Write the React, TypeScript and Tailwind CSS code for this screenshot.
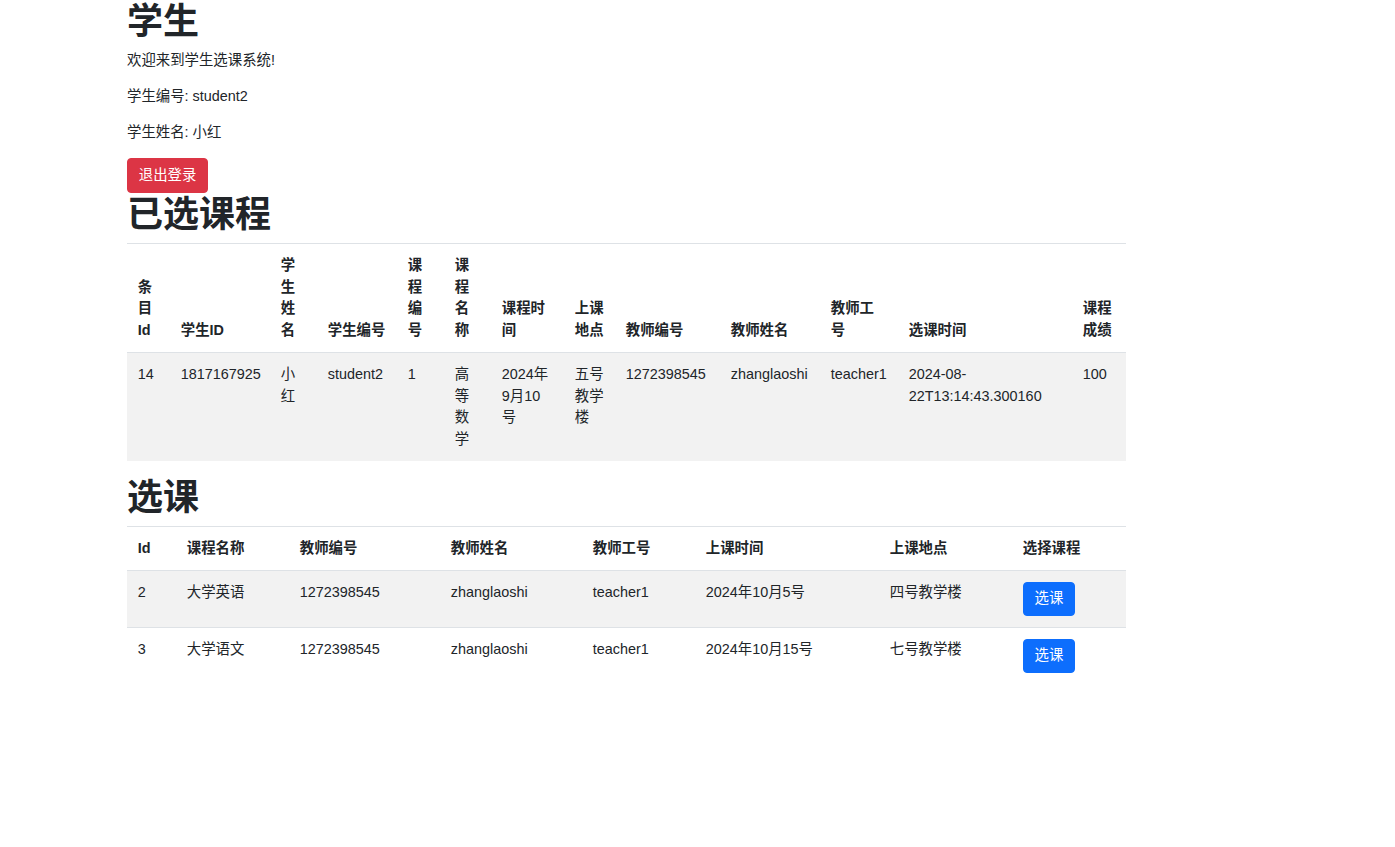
import React from 'react';

const font = { fontFamily: '"Liberation Sans", "Noto Sans CJK SC", sans-serif' };

const selectedCols = [43, 100, 47, 80, 47, 47, 73, 51, 105, 100, 78, 174, 54];
const selectedHead = ['条目Id', '学生ID', '学生姓名', '学生编号', '课程编号', '课程名称', '课程时间', '上课地点', '教师编号', '教师姓名', '教师工号', '选课时间', '课程成绩'];
const selectedRows = [
  ['14', '1817167925', '小红', 'student2', '1', '高等数学', '2024年9月10号', '五号教学楼', '1272398545', 'zhanglaoshi', 'teacher1', '2024-08-22T13:14:43.300160', '100'],
];

const courseCols = [49, 113, 151, 142, 113, 184, 133, 114];
const courseHead = ['Id', '课程名称', '教师编号', '教师姓名', '教师工号', '上课时间', '上课地点', '选择课程'];
const courses = [
  ['2', '大学英语', '1272398545', 'zhanglaoshi', 'teacher1', '2024年10月5号', '四号教学楼'],
  ['3', '大学语文', '1272398545', 'zhanglaoshi', 'teacher1', '2024年10月15号', '七号教学楼'],
];

const th = 'p-[10.8px] align-bottom text-left font-bold border-t border-b border-[#dee2e6]';
const td = 'p-[10.8px] align-top border-t border-[#dee2e6]';

export default function App() {
  return (
    <div className="min-h-[847px] bg-white text-[#212529] text-[14.4px] leading-[1.5]" style={font}>
      <div className="ml-[127px] w-[999px]">
        <h1 className="text-[36px] leading-[1.2] font-bold mb-[7.2px]">学生</h1>
        <p className="mb-[14.4px]">欢迎来到学生选课系统!</p>
        <p className="mb-[14.4px]">学生编号: student2</p>
        <p className="mb-[14.4px]">学生姓名: 小红</p>
        <button className="block bg-[#dc3545] text-white border border-[#dc3545] rounded-[4px] px-[10.8px] py-[5.4px] leading-[1.5]">
          退出登录
        </button>

        <h2 className="text-[36px] leading-[1.2] font-bold mb-[7.2px]">已选课程</h2>
        <table className="w-full table-fixed border-collapse mb-[14.4px]">
          <colgroup>
            {selectedCols.map((w, i) => (
              <col key={i} style={{ width: w }} />
            ))}
          </colgroup>
          <thead>
            <tr>
              {selectedHead.map((h) => (
                <th key={h} className={th}>{h}</th>
              ))}
            </tr>
          </thead>
          <tbody>
            {selectedRows.map((r, i) => (
              <tr key={i} className="bg-[#f2f2f2]">
                {r.map((c, j) => (
                  <td key={j} className={td}>{c}</td>
                ))}
              </tr>
            ))}
          </tbody>
        </table>

        <h2 className="text-[36px] leading-[1.2] font-bold mb-[7.2px]">选课</h2>
        <table className="w-full table-fixed border-collapse">
          <colgroup>
            {courseCols.map((w, i) => (
              <col key={i} style={{ width: w }} />
            ))}
          </colgroup>
          <thead>
            <tr>
              {courseHead.map((h) => (
                <th key={h} className={th}>{h}</th>
              ))}
            </tr>
          </thead>
          <tbody>
            {courses.map((r, i) => (
              <tr key={i} className={i % 2 === 0 ? 'bg-[#f2f2f2]' : ''}>
                {r.map((c, j) => (
                  <td key={j} className={td}>{c}</td>
                ))}
                <td className={td}>
                  <button className="bg-[#0d6efd] text-white border border-[#0d6efd] rounded-[4px] px-[10.8px] py-[5.4px] leading-[1.5]">
                    选课
                  </button>
                </td>
              </tr>
            ))}
          </tbody>
        </table>
      </div>
    </div>
  );
}
